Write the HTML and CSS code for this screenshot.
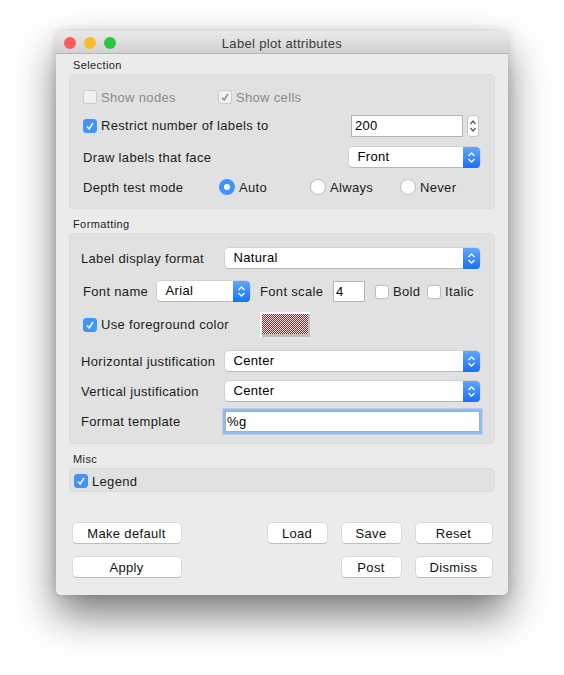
FILE: index.html
```html
<!DOCTYPE html>
<html>
<head>
    <title>Label plot attributes</title>
    <link rel="stylesheet" href="styles.css">
</head>
<body>
    <div class="window">
        <div class="titlebar">
            <div class="lights">
                <span class="light red"></span>
                <span class="light yellow"></span>
                <span class="light green"></span>
            </div>
            <div class="title">Label plot attributes</div>
        </div>
        <div class="content">
            <div class="group-title">Selection</div>
            <div class="panel selection">
                <div class="row row-disabled">
                    <label class="check nodes"><span class="box"></span>Show nodes</label>
                    <label class="check"><span class="box checked-off"><svg viewBox="0 0 14 14"><path d="M3.500 7.500 6 10.500 10.500 3.500"/></svg></span>Show cells</label>
                </div>
                <div class="row row-restrict">
                    <label class="check"><span class="box on"><svg viewBox="0 0 14 14"><path d="M3.500 7.500 6 10.500 10.500 3.500"/></svg></span>Restrict number of labels to</label>
                    <div class="spin-wrap">
                        <div class="field field-count">200</div>
                        <div class="stepper"><svg viewBox="0 0 10 20"><path d="M2.500 8 5 5 7.500 8M2.500 12 5 15 7.500 12"/></svg></div>
                    </div>
                </div>
                <div class="row row-face">
                    <span>Draw labels that face</span>
                    <div class="select select-face"><span>Front</span><i class="arrows"><svg viewBox="0 0 17 21"><path d="M5.500 9 8.500 6 11.500 9M5.500 12 8.500 15 11.500 12"/></svg></i></div>
                </div>
                <div class="row row-depth">
                    <span class="depth-label">Depth test mode</span>
                    <label class="radio radio-auto"><span class="dot on"></span>Auto</label>
                    <label class="radio radio-always"><span class="dot"></span>Always</label>
                    <label class="radio"><span class="dot"></span>Never</label>
                </div>
            </div>

            <div class="group-title">Formatting</div>
            <div class="panel formatting">
                <div class="row row-format">
                    <span class="form-label">Label display format</span>
                    <div class="select select-wide"><span>Natural</span><i class="arrows"><svg viewBox="0 0 17 21"><path d="M5.500 9 8.500 6 11.500 9M5.500 12 8.500 15 11.500 12"/></svg></i></div>
                </div>
                <div class="row row-font">
                    <span class="font-label">Font name</span>
                    <div class="select select-font"><span>Arial</span><i class="arrows"><svg viewBox="0 0 17 21"><path d="M5.500 9 8.500 6 11.500 9M5.500 12 8.500 15 11.500 12"/></svg></i></div>
                    <span class="scale-label">Font scale</span>
                    <div class="field field-scale">4</div>
                    <label class="check bold"><span class="box"></span>Bold</label>
                    <label class="check"><span class="box"></span>Italic</label>
                </div>
                <div class="row row-color">
                    <label class="check fg"><span class="box on"><svg viewBox="0 0 14 14"><path d="M3.500 7.500 6 10.500 10.500 3.500"/></svg></span>Use foreground color</label>
                    <div class="swatch"><div class="swatch-fill"></div></div>
                </div>
                <div class="row row-horiz">
                    <span class="form-label">Horizontal justification</span>
                    <div class="select select-wide"><span>Center</span><i class="arrows"><svg viewBox="0 0 17 21"><path d="M5.500 9 8.500 6 11.500 9M5.500 12 8.500 15 11.500 12"/></svg></i></div>
                </div>
                <div class="row row-vert">
                    <span class="form-label">Vertical justification</span>
                    <div class="select select-wide"><span>Center</span><i class="arrows"><svg viewBox="0 0 17 21"><path d="M5.500 9 8.500 6 11.500 9M5.500 12 8.500 15 11.500 12"/></svg></i></div>
                </div>
                <div class="row row-template">
                    <span class="form-label">Format template</span>
                    <div class="field field-template">%g</div>
                </div>
            </div>

            <div class="group-title">Misc</div>
            <div class="panel misc">
                <label class="check"><span class="box on"><svg viewBox="0 0 14 14"><path d="M3.500 7.500 6 10.500 10.500 3.500"/></svg></span>Legend</label>
            </div>

            <div class="buttons">
                <div class="button-row">
                    <button class="btn btn-wide">Make default</button>
                    <div class="button-right">
                        <button class="btn btn-mid">Load</button>
                        <button class="btn btn-mid">Save</button>
                        <button class="btn btn-end">Reset</button>
                    </div>
                </div>
                <div class="button-row">
                    <button class="btn btn-wide">Apply</button>
                    <div class="button-right">
                        <button class="btn btn-mid">Post</button>
                        <button class="btn btn-end">Dismiss</button>
                    </div>
                </div>
            </div>
        </div>
    </div>
</body>
</html>
```

FILE: styles.css
```css
body {
    margin: 0;
    height: 675px;
    overflow: hidden;
    background-color: #fff;
    font-family: "Liberation Sans", Arial, sans-serif;
    font-size: 13px;
    letter-spacing: 0.33px;
    color: #1c1c1c;
}

.window {
    width: 452px;
    height: 564px;
    margin: 31px 0 0 56px;
    background-color: #ebebeb;
    border-radius: 6px 6px 5px 5px;
    box-shadow: 0 20px 40px rgba(0, 0, 0, 0.52), 0 0 10px rgba(0, 0, 0, 0.14);
    overflow: hidden;
}

.titlebar {
    height: 22px;
    display: flex;
    align-items: center;
    justify-content: center;
    position: relative;
    background: linear-gradient(#e9e9e9, #d2d2d2);
    border-bottom: 1px solid #b4b4b4;
}

.lights {
    position: absolute;
    left: 8px;
    top: 6px;
    display: flex;
    gap: 8px;
}

.light {
    width: 12px;
    height: 12px;
    border-radius: 50%;
}

.red { background-color: #fc5b57; }
.yellow { background-color: #fdbb2e; }
.green { background-color: #2ac83f; }

.title {
    color: #3a3a3a;
    margin-top: 2px;
}

.content {
    padding: 5px 13px 0;
}

.group-title {
    font-size: 11px;
    letter-spacing: 0.4px;
    line-height: 12px;
    margin-left: 4px;
    margin-bottom: 3px;
}

.panel {
    box-sizing: border-box;
    background-color: #e1e1e1;
    border: 1px solid #dcdcdc;
    border-radius: 4px;
}

.selection {
    height: 135px;
    margin-bottom: 9px;
    padding: 0 14px 0 13px;
}

.formatting {
    height: 211px;
    margin-bottom: 9px;
    padding: 0 14px 0 11px;
}

.misc {
    height: 24px;
    padding-left: 4px;
    padding-top: 2px;
    display: flex;
    align-items: center;
    margin-bottom: 31px;
}

.row {
    display: flex;
    align-items: center;
}

.check, .radio {
    display: flex;
    align-items: center;
    white-space: nowrap;
}

.box {
    box-sizing: border-box;
    width: 14px;
    height: 14px;
    margin-right: 4px;
    background-color: #fff;
    border: 1px solid #bdbdbd;
    border-radius: 3px;
    flex: none;
}

.box svg {
    display: block;
    width: 12px;
    height: 12px;
}

.box path {
    fill: none;
    stroke: #fff;
    stroke-width: 1.7;
}

.box.on {
    background-color: #3f95fb;
    border-color: #3f95fb;
}

.row-disabled {
    height: 18px;
    margin-top: 13px;
    color: #8b8b8b;
}

.nodes {
    width: 135px;
}

.row-disabled .box {
    background-color: #f1f1f1;
    border-color: #cacaca;
}

.box.checked-off path {
    stroke: #8f8f8f;
}

.row-restrict {
    height: 23px;
    margin-top: 8px;
    justify-content: space-between;
}

.spin-wrap {
    display: flex;
    align-items: center;
    gap: 4px;
    margin-right: 1px;
}

.field {
    box-sizing: border-box;
    background-color: #fff;
    border: 1px solid #b4b4b4;
    color: #000;
    display: flex;
    align-items: center;
}

.field-count {
    width: 112px;
    height: 22px;
    padding-left: 3px;
}

.stepper {
    box-sizing: border-box;
    width: 12px;
    height: 22px;
    background-color: #fff;
    border: 1px solid #c3c3c3;
    border-radius: 4px;
}

.stepper svg {
    display: block;
    width: 10px;
    height: 20px;
}

.stepper path, .arrows path {
    fill: none;
    stroke: #555;
    stroke-width: 1.3;
}

.row-face {
    height: 21px;
    margin-top: 10px;
    justify-content: space-between;
}

.select {
    box-sizing: border-box;
    height: 20px;
    align-self: flex-start;
    background-color: #fff;
    border-radius: 4px;
    box-shadow: 0 0 0 0.5px #c4c4c4, 0 1px 0 #adadad;
    display: flex;
    align-items: flex-start;
    justify-content: space-between;
    padding-left: 8.500px;
    color: #000;
}

.select span {
    line-height: 19px;
}

.arrows {
    width: 17px;
    height: 21px;
    background: linear-gradient(#5fa8fc, #1a70f5);
    border-radius: 0 4px 4px 0;
}

.arrows svg {
    display: block;
    width: 17px;
    height: 21px;
}

.arrows path {
    stroke: #fff;
}

.select-face {
    width: 131px;
}

.row-depth {
    height: 18px;
    margin-top: 10px;
}

.depth-label {
    width: 136px;
}

.radio-auto {
    width: 91px;
}

.radio-always {
    width: 90px;
}

.dot {
    box-sizing: border-box;
    width: 16px;
    height: 16px;
    margin-right: 4px;
    background-color: #fff;
    border: 1px solid #bdbdbd;
    border-radius: 50%;
    flex: none;
}

.dot.on {
    background-color: #fff;
    border: 5px solid #3f95fb;
}

.form-label {
    width: 144px;
    flex: none;
}

.select-wide {
    width: 255px;
}

.row-format {
    height: 21px;
    margin-top: 14px;
}

.row-font {
    height: 21px;
    margin-top: 12px;
    margin-left: 2px;
}

.font-label {
    width: 74px;
    flex: none;
}

.select-font {
    width: 93px;
}

.scale-label {
    margin-left: 10px;
    width: 73px;
    flex: none;
}

.field-scale {
    width: 32px;
    height: 21px;
    padding-left: 2px;
}

.bold {
    margin-left: 10px;
    width: 52px;
}

.row-color {
    height: 25px;
    margin-top: 10px;
    margin-left: 2px;
}

.fg {
    width: 177px;
}

.swatch {
    box-sizing: border-box;
    width: 50px;
    height: 25px;
    background-color: #bdbdbd;
    border-top: 2px solid #f8f8f8;
    border-left: 2px solid #f8f8f8;
    padding: 0 2px 3px 0;
}

.swatch-fill {
    width: 100%;
    height: 100%;
    background-color: #fff;
    background-image: repeating-conic-gradient(#e00000 0 25%, #fff 0 50%);
    background-size: 2px 2px;
}

.row-horiz {
    height: 21px;
    margin-top: 14px;
}

.row-vert {
    height: 21px;
    margin-top: 9px;
}

.row-template {
    height: 21px;
    margin-top: 9px;
}

.field-template {
    width: 255px;
    height: 21px;
    padding-left: 1px;
    box-shadow: 0 0 0 2.500px #90bbee;
    border-color: #9fb0c4;
}

.button-row {
    display: flex;
    justify-content: space-between;
    margin-bottom: 14px;
    padding: 0 3.500px;
}

.button-right {
    display: flex;
    gap: 15px;
}

.btn {
    box-sizing: border-box;
    height: 20px;
    padding: 0;
    background-color: #fff;
    border: none;
    border-radius: 4px;
    box-shadow: 0 0 0 0.5px #c8c8c8, 0 1px 0 #b5b5b5;
    font-family: "Liberation Sans", Arial, sans-serif;
    font-size: 13px;
    letter-spacing: 0.33px;
    color: #111;
}

.btn-wide {
    width: 108px;
}

.btn-mid {
    width: 59px;
}

.btn-end {
    width: 76px;
}
```
